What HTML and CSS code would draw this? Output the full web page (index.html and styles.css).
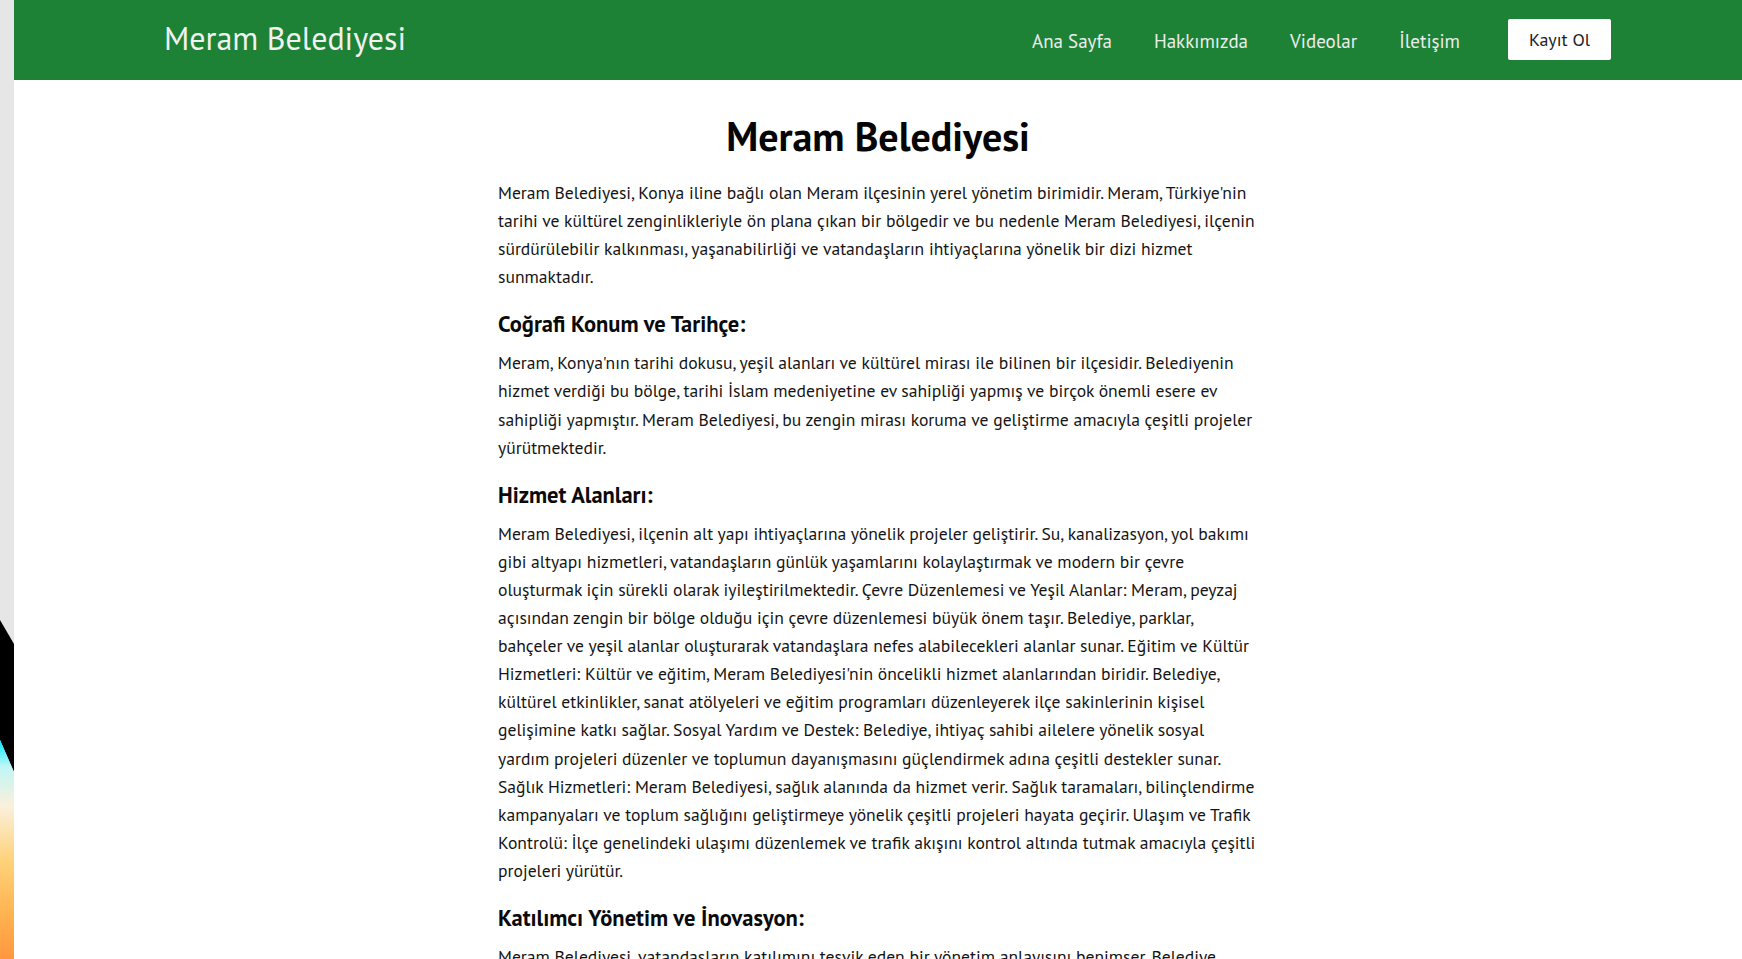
FILE: index.html
```html
<!DOCTYPE html>
<html lang="tr">
<head>
<meta charset="utf-8">
<title>Meram Belediyesi</title>
<link rel="stylesheet" href="styles.css">
</head>
<body>
<div class="desk">
  <svg class="desk-art" width="14" height="959" viewBox="0 0 14 959" preserveAspectRatio="none" aria-hidden="true">
    <defs>
      <linearGradient id="wall" x1="0" y1="0" x2="0" y2="1">
        <stop offset="0" stop-color="#00eaff"/>
        <stop offset="0.12" stop-color="#bff6f7"/>
        <stop offset="0.3" stop-color="#fbf0dc"/>
        <stop offset="0.55" stop-color="#ffd27a"/>
        <stop offset="0.8" stop-color="#ffb24f"/>
        <stop offset="1" stop-color="#ff9740"/>
      </linearGradient>
    </defs>
    <rect x="0" y="0" width="14" height="959" fill="#e6e6e6"/>
    <polygon points="0,620 14,644 14,772 0,740" fill="#000"/>
    <polygon points="0,740 14,772 14,959 0,959" fill="url(#wall)"/>
  </svg>
</div>
<div class="page">
  <header class="navbar">
    <a class="brand" href="#">Meram Belediyesi</a>
    <nav class="nav">
      <a class="nav-link" href="#">Ana Sayfa</a>
      <a class="nav-link" href="#">Hakkımızda</a>
      <a class="nav-link" href="#">Videolar</a>
      <a class="nav-link" href="#">İletişim</a>
      <a class="btn-register" href="#">Kayıt Ol</a>
    </nav>
  </header>
  <main class="content">
    <h1 class="title">Meram Belediyesi</h1>
    <p>Meram Belediyesi, Konya iline bağlı olan Meram ilçesinin yerel yönetim birimidir. Meram, Türkiye'nin tarihi ve kültürel zenginlikleriyle ön plana çıkan bir bölgedir ve bu nedenle Meram Belediyesi, ilçenin sürdürülebilir kalkınması, yaşanabilirliği ve vatandaşların ihtiyaçlarına yönelik bir dizi hizmet sunmaktadır.</p>
    <h3>Coğrafi Konum ve Tarihçe:</h3>
    <p>Meram, Konya'nın tarihi dokusu, yeşil alanları ve kültürel mirası ile bilinen bir ilçesidir. Belediyenin hizmet verdiği bu bölge, tarihi İslam medeniyetine ev sahipliği yapmış ve birçok önemli esere ev sahipliği yapmıştır. Meram Belediyesi, bu zengin mirası koruma ve geliştirme amacıyla çeşitli projeler yürütmektedir.</p>
    <h3>Hizmet Alanları:</h3>
    <p>Meram Belediyesi, ilçenin alt yapı ihtiyaçlarına yönelik projeler geliştirir. Su, kanalizasyon, yol bakımı gibi altyapı hizmetleri, vatandaşların günlük yaşamlarını kolaylaştırmak ve modern bir çevre oluşturmak için sürekli olarak iyileştirilmektedir. Çevre Düzenlemesi ve Yeşil Alanlar: Meram, peyzaj açısından zengin bir bölge olduğu için çevre düzenlemesi büyük önem taşır. Belediye, parklar, bahçeler ve yeşil alanlar oluşturarak vatandaşlara nefes alabilecekleri alanlar sunar. Eğitim ve Kültür Hizmetleri: Kültür ve eğitim, Meram Belediyesi'nin öncelikli hizmet alanlarından biridir. Belediye, kültürel etkinlikler, sanat atölyeleri ve eğitim programları düzenleyerek ilçe sakinlerinin kişisel gelişimine katkı sağlar. Sosyal Yardım ve Destek: Belediye, ihtiyaç sahibi ailelere yönelik sosyal yardım projeleri düzenler ve toplumun dayanışmasını güçlendirmek adına çeşitli destekler sunar. Sağlık Hizmetleri: Meram Belediyesi, sağlık alanında da hizmet verir. Sağlık taramaları, bilinçlendirme kampanyaları ve toplum sağlığını geliştirmeye yönelik çeşitli projeleri hayata geçirir. Ulaşım ve Trafik Kontrolü: İlçe genelindeki ulaşımı düzenlemek ve trafik akışını kontrol altında tutmak amacıyla çeşitli projeleri yürütür.</p>
    <h3>Katılımcı Yönetim ve İnovasyon:</h3>
    <p>Meram Belediyesi, vatandaşların katılımını teşvik eden bir yönetim anlayışını benimser. Belediye, vatandaşlarla düzenli toplantılar yaparak görüş ve önerileri dikkate alır ve yenilikçi uygulamaları hizmetlerine entegre ederek daha etkin ve şeffaf bir yönetim sunmayı hedefler.</p>
  </main>
</div>
</body>
</html>
```
FILE: styles.css
```css
html, body {
  margin: 0;
  padding: 0;
}

body {
  display: flex;
  height: 100vh;
  background: #ffffff;
  font-family: "PT Sans", Lato, "Noto Sans", sans-serif;
  color: #141414;
  overflow: hidden;
}

.desk {
  flex: 0 0 14px;
  width: 14px;
  background: #e6e6e6;
}

.desk-art {
  display: block;
  width: 14px;
  height: 959px;
}

.page {
  flex: 1 1 auto;
  min-width: 0;
  background: #ffffff;
  overflow: hidden;
}

.navbar {
  height: 80px;
  background: #1d8236;
  display: flex;
  align-items: center;
  justify-content: space-between;
  padding: 0 131px 0 150px;
  box-sizing: border-box;
}

.brand {
  color: #f1f1f1;
  font-size: 32px;
  text-decoration: none;
  line-height: 1;
  padding-bottom: 4px;
}

.nav {
  display: flex;
  align-items: center;
}

.nav-link {
  color: #ececec;
  font-size: 19px;
  text-decoration: none;
  padding: 0 21px;
  margin-top: 2px;
}

.btn-register {
  margin-left: 27px;
  background: #ffffff;
  color: #222222;
  font-size: 18px;
  text-decoration: none;
  width: 103px;
  height: 41px;
  display: flex;
  align-items: center;
  justify-content: center;
  border-radius: 2px;
  box-sizing: border-box;
  margin-bottom: 2px;
}

.content {
  width: 760px;
  margin: 0 auto;
  padding-top: 32px;
}

.title {
  margin: 0 0 19px;
  text-align: center;
  font-size: 40px;
  line-height: 48px;
  font-weight: 700;
  color: #050505;
}

.content p {
  margin: 0 0 20px;
  font-size: 17.6px;
  line-height: 28.1px;
}

.content h3 {
  margin: 0 0 12px;
  font-size: 22.5px;
  line-height: 26px;
  font-weight: 700;
  color: #0a0a0a;
}
```
